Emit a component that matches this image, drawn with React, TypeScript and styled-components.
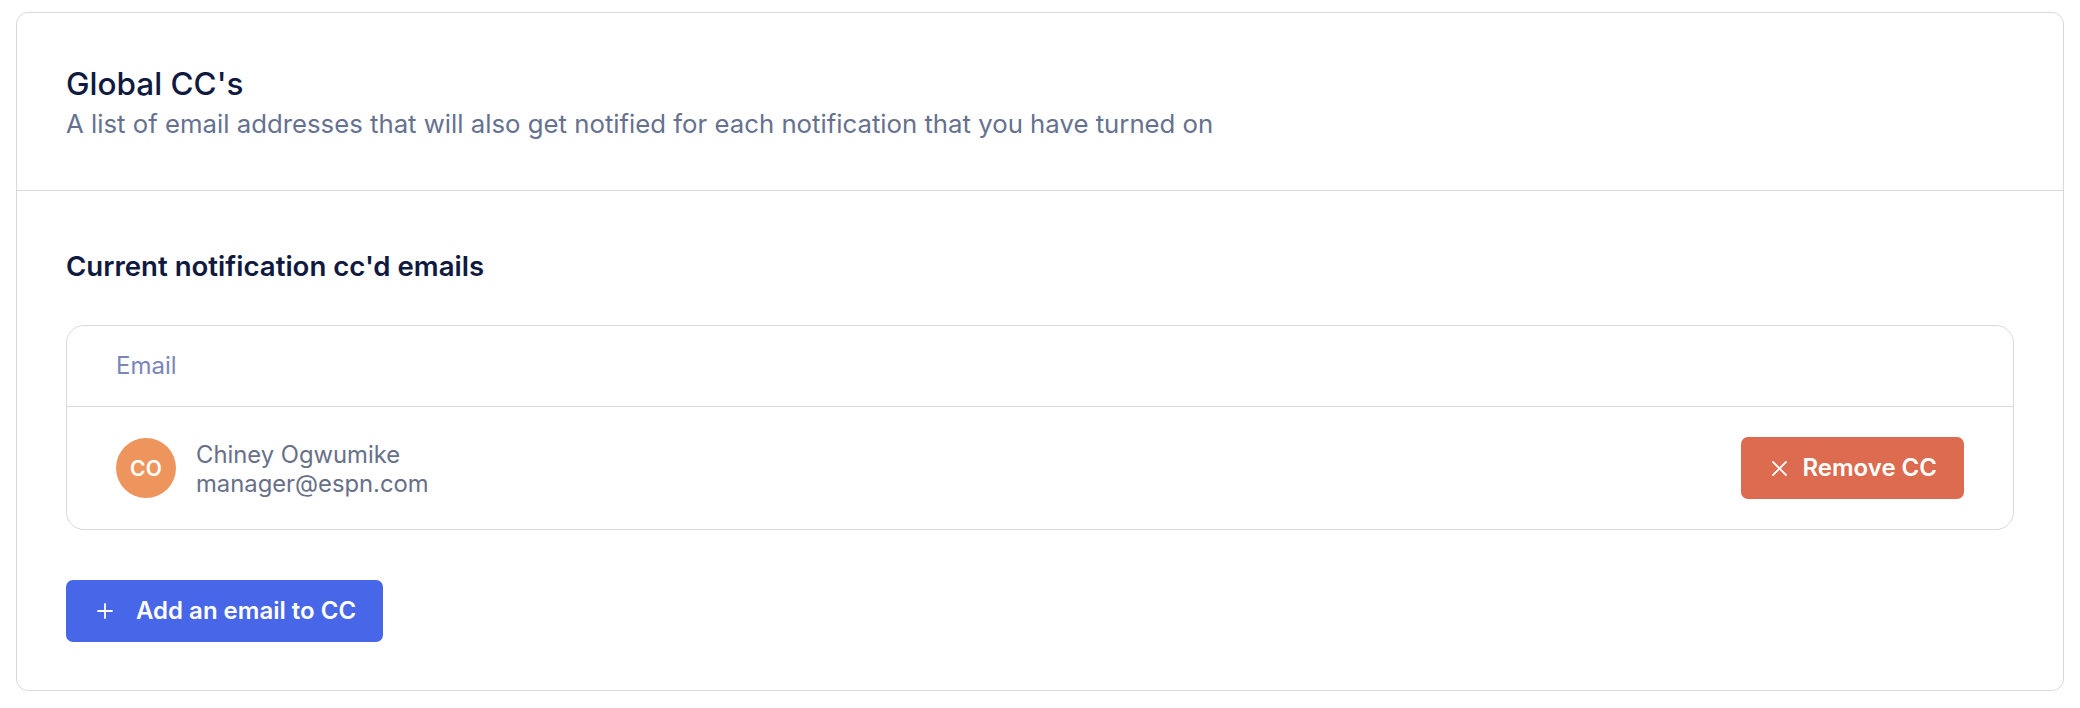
import React from "react";
import styled, { createGlobalStyle } from "styled-components";

const GlobalStyle = createGlobalStyle`
  html, body {
    margin: 0;
    padding: 0;
    background: #ffffff;
    font-family: Inter, "Noto Sans", "Liberation Sans", sans-serif;
    -webkit-font-smoothing: antialiased;
  }
  * { box-sizing: border-box; }
`;

const Page = styled.div`
  padding: 12px 16px;
`;

const Card = styled.section`
  border: 1px solid #d9d9dc;
  border-radius: 12px;
  background: #fff;
`;

const Header = styled.header`
  padding: 48px 49px;
  border-bottom: 1px solid #d9d9dc;
`;

const Title = styled.h2`
  margin: 0;
  font-size: 31.5px;
  line-height: 45px;
  font-weight: 500;
  color: #101a40;
`;

const Subtitle = styled.p`
  margin: 0;
  font-size: 25.75px;
  line-height: 36px;
  font-weight: 400;
  color: #667190;
`;

const Body = styled.div`
  padding: 54px 49px 48px;
  display: flex;
  flex-direction: column;
  align-items: flex-start;
`;

const SectionTitle = styled.h3`
  margin: 0 0 38px;
  font-size: 27.6px;
  line-height: 42px;
  font-weight: 600;
  color: #101a40;
`;

const Table = styled.div`
  align-self: stretch;
  border: 1px solid #d9d9dc;
  border-radius: 18px;
  margin-bottom: 50px;
`;

const HeadRow = styled.div`
  padding: 22px 49px;
  border-bottom: 1px solid #d9d9dc;
  font-size: 24px;
  line-height: 36px;
  font-weight: 400;
  color: #7a86b8;
`;

const Row = styled.div`
  display: flex;
  align-items: center;
  justify-content: space-between;
  padding: 30px 49px;
`;

const Person = styled.div`
  display: flex;
  align-items: center;
  gap: 20px;
`;

const Avatar = styled.div`
  width: 60px;
  height: 60px;
  border-radius: 50%;
  background: #ee955d;
  color: #fff;
  display: flex;
  align-items: center;
  justify-content: center;
  font-size: 21px;
  font-weight: 600;
  letter-spacing: 0.2px;
`;

const Info = styled.div`
  display: flex;
  flex-direction: column;
  font-size: 23.8px;
  line-height: 28.5px;
  color: #687089;
  padding-top: 3px;
`;

const Button = styled.button<{ $bg: string; $gap: number }>`
  display: inline-flex;
  align-items: center;
  gap: ${(p) => p.$gap}px;
  height: 62px;
  padding: 0 27px 0 31px;
  border: none;
  border-radius: 7px;
  background: ${(p) => p.$bg};
  color: #fff;
  font-family: inherit;
  font-size: 24px;
  font-weight: 600;
  line-height: 1;
  cursor: pointer;
  svg { display: block; flex: none; }
`;

const PlusIcon = () => (
  <svg width="16" height="16" viewBox="0 0 16 16" fill="none" stroke="#fff" strokeWidth="1.8" strokeLinecap="round">
    <path d="M8 1v14M1 8h14" />
  </svg>
);

const XIcon = () => (
  <svg width="15" height="15" viewBox="0 0 15 15" fill="none" stroke="#fff" strokeWidth="1.8" strokeLinecap="round">
    <path d="M1 1l13 13M14 1L1 14" />
  </svg>
);

export default function App() {
  return (
    <>
      <GlobalStyle />
      <Page>
        <Card>
          <Header>
            <Title>Global CC's</Title>
            <Subtitle>
              A list of email addresses that will also get notified for each notification that you have turned on
            </Subtitle>
          </Header>
          <Body>
            <SectionTitle>Current notification cc'd emails</SectionTitle>
            <Table>
              <HeadRow>Email</HeadRow>
              <Row>
                <Person>
                  <Avatar>CO</Avatar>
                  <Info>
                    <span>Chiney Ogwumike</span>
                    <span>manager@espn.com</span>
                  </Info>
                </Person>
                <Button $bg="#dc6b4f" $gap={15}>
                  <XIcon />
                  Remove CC
                </Button>
              </Row>
            </Table>
            <Button $bg="#4766e8" $gap={23}>
              <PlusIcon />
              Add an email to CC
            </Button>
          </Body>
        </Card>
      </Page>
    </>
  );
}
